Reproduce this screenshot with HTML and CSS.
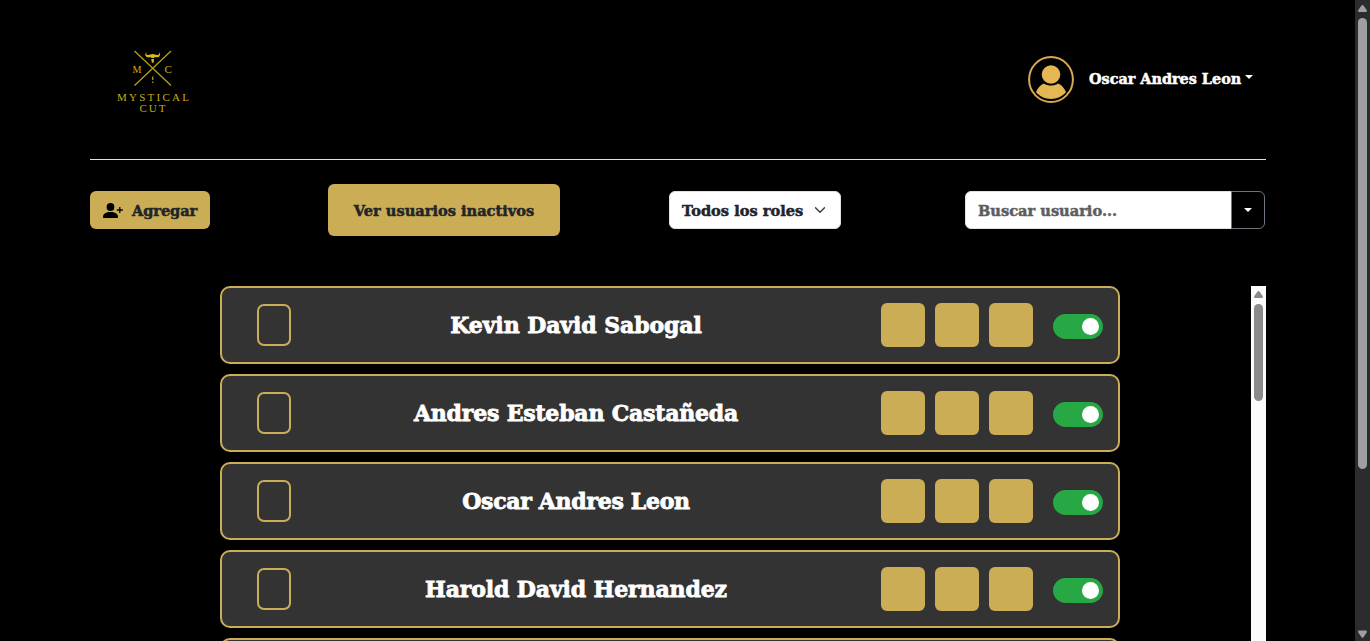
FILE: index.html
```html
<!DOCTYPE html>
<html lang="es">
<head>
<meta charset="utf-8">
<title>Mystical Cut</title>
<link rel="stylesheet" href="styles.css">
</head>
<body>
<div class="page">
  <header class="header">
    <svg class="logo" width="74" height="66" viewBox="0 0 74 66">
      <path d="M18.500 4 55 38.500M55 4 18.500 38.500" fill="none" stroke="#b5a012" stroke-width="1.300"/>
      <path d="M30.500 5c-1 1.700-.2 3 1.800 2.900 1.600 0 2.500-1 4.400-1s2.800 1 4.400 1c2 .1 2.800-1.200 1.800-2.900 2 1.400 1.400 5.300-1.800 5.300h-2.600l-.8.800h-2l-.8-.8h-2.600c-3.200 0-3.800-3.900-1.800-5.300z" fill="#d8bd0e"/>
      <path d="M35.300 12h2.800l-.5 3.800h-1.800z" fill="#d8bd0e"/>
      <path d="M36.700 29.500v3.500M36.700 34.500v1.500" stroke="#a08d10" stroke-width="1.500"/>
      <g class="logo-text"><text x="16.500" y="25.500" textLength="9" lengthAdjust="spacingAndGlyphs">M</text><text x="48.500" y="25.500">C</text><text x="1" y="53.700" textLength="72">MYSTICAL</text><text x="23.500" y="64.500" textLength="26">CUT</text></g>
    </svg>
    <div class="account">
      <svg class="avatar" width="46" height="48" viewBox="0 0 46 48">
        <ellipse cx="23" cy="24.500" rx="21.900" ry="22.500" fill="none" stroke="#d9aa4d" stroke-width="2"/>
        <circle cx="23" cy="19.500" r="9.300" fill="#e4b654"/>
        <path d="M8 37c1.700-4.300 4.500-7.200 8-8.600 4 2.800 10 2.800 14 0 3.500 1.400 6.300 4.300 8 8.600-7.500 9.300-22.500 9.300-30 0z" fill="#e4b654"/>
      </svg>
      <span class="account-name">Oscar Andres Leon</span><i class="caret"></i>
    </div>
  </header>
  <div class="toolbar">
    <button class="btn add"><svg width="22" height="16" viewBox="0 0 22 16"><circle cx="8.500" cy="5" r="3.900"/><path d="M1 15c0-3.500 3-5 7.500-5s7.500 1.500 7.500 5c0 .7-.4 1-1 1H2c-.6 0-1-.3-1-1z"/><path d="M17.800 5v6M14.800 8h6" stroke="#000" stroke-width="1.300"/></svg><span>Agregar</span></button>
    <button class="btn inactive"><span>Ver usuarios inactivos</span></button>
    <div class="select"><span>Todos los roles</span><svg width="12" height="12" viewBox="0 0 16 16"><path d="m2 5 6 6 6-6" fill="none" stroke="#343a40" stroke-width="1.800" stroke-linecap="round" stroke-linejoin="round"/></svg></div>
    <div class="search"><div class="field"><span>Buscar usuario...</span></div><button class="drop"><i class="caret"></i></button></div>
  </div>
  <div class="users">
    <div class="list">
      <div class="card"><i class="check"></i><span class="name n1">Kevin David Sabogal</span><div class="actions"><i></i><i></i><i></i></div><i class="toggle"></i></div>
      <div class="card"><i class="check"></i><span class="name n2">Andres Esteban Castañeda</span><div class="actions"><i></i><i></i><i></i></div><i class="toggle"></i></div>
      <div class="card"><i class="check"></i><span class="name n3">Oscar Andres Leon</span><div class="actions"><i></i><i></i><i></i></div><i class="toggle"></i></div>
      <div class="card"><i class="check"></i><span class="name n4">Harold David Hernandez</span><div class="actions"><i></i><i></i><i></i></div><i class="toggle"></i></div>
      <div class="card"></div>
    </div>
    <div class="bar light"><svg width="9" height="8" viewBox="0 0 9 8"><path d="M.5 7 0 5.500 3.500.5q1-1 2 0L9 5.500 8.500 7z"/></svg><i class="thumb"></i></div>
  </div>
</div>
<div class="bar dark"><svg width="9" height="8" viewBox="0 0 9 8"><path d="M.5 7 0 5.500 3.500.5q1-1 2 0L9 5.500 8.500 7z"/></svg><i class="thumb"></i><svg class="down" width="9" height="8" viewBox="0 0 9 8"><path d="M.5.500 0 2l3.500 5.200q1 1.200 2 0L9 2 8.500.5z"/></svg></div>
</body>
</html>
```
FILE: styles.css
```css
* { box-sizing: border-box; }
body { margin: 0; height: 641px; display: flex; overflow: hidden; background: #000; color: #fff; font: bold 14.6px/24px "DejaVu Serif", serif; -webkit-text-stroke: .5px currentColor; }
i { display: block; flex: none; }
svg { display: block; flex: none; }
span { white-space: nowrap; }
button { font: inherit; border: 0; padding: 0; color: #212529; }
.page { width: 1355px; padding: 0 89px 0 90px; }
.header { height: 160px; display: flex; justify-content: space-between; align-items: flex-start; border-bottom: 1px solid #dee2e6; }
.logo { margin: 47px 0 0 26px; overflow: visible; }
.logo-text { font: 11px "Liberation Serif", serif; fill: #c4ad13; -webkit-text-stroke: .45px #c4ad13; }
.account { display: flex; align-items: center; margin: 55px 13px 0 0; }
.account-name { width: 153px; margin-left: 15px; font-size: 14.4px; }
.caret { width: 8px; height: 4px; background: currentColor; clip-path: polygon(0 0, 100% 0, 50% 100%); }
.account .caret { margin: -4px 0 0 3px; }
.toolbar { height: 100px; display: flex; align-items: center; }
.toolbar span { padding-top: 1px; }
.btn { display: flex; align-items: center; background: #cbad56; border-radius: 6px; }
.add { width: 120px; height: 38px; padding-left: 12px; gap: 8px; }
.add span { letter-spacing: -.1px; }
.inactive { width: 232px; height: 52px; margin-left: 118px; justify-content: center; }
.select { width: 172px; height: 38px; margin-left: 109px; padding: 0 14px 0 12px; display: flex; align-items: center; justify-content: space-between; color: #212529; background: #fff; border: 1px solid #dee2e6; border-radius: 6px; }
.search { width: 300px; height: 38px; margin-left: 124px; display: flex; }
.field { width: 267px; display: flex; align-items: center; background: #fff; border: 1px solid #dee2e6; border-radius: 6px 0 0 6px; color: #5b5e61; padding: 0 12px; }
.drop { width: 34px; margin-left: -1px; display: flex; align-items: center; justify-content: center; background: #000; color: #fff; border: 1px solid #6c757d; border-radius: 0 6px 6px 0; }
.users { height: 355px; margin-top: 26px; display: flex; justify-content: space-between; overflow: hidden; }
.list { width: 900px; margin-left: 130px; display: flex; flex-direction: column; gap: 10px; }
.card { flex: none; height: 78px; padding: 0 15px 0 35px; display: flex; align-items: center; background: #333; border: 2px solid #cbad56; border-radius: 10px; }
.check { width: 34px; height: 42px; border: 2px solid #cbad56; border-radius: 7px; }
.name { flex: 1; padding-bottom: 1px; text-align: center; font-size: 22px; line-height: 30px; -webkit-text-stroke-width: .8px; }
.n1 { letter-spacing: -.08px; }
.n2 { letter-spacing: -.2px; }
.n3 { letter-spacing: -.3px; }
.n4 { letter-spacing: -.13px; }
.actions { display: flex; gap: 10px; margin: 0 20px; }
.actions i { width: 44px; height: 44px; background: #cbad56; border-radius: 6px; }
.toggle { width: 50px; height: 25px; margin-top: 3px; padding: 3.5px 4px; border-radius: 13px; background: #28a745; }
.toggle::after { content: ""; display: block; width: 17.500px; height: 17.500px; margin-left: auto; border-radius: 50%; background: #fff; }
.bar { width: 15px; flex: none; display: flex; flex-direction: column; align-items: center; padding-top: 5px; }
.thumb { width: 9px; border-radius: 5px; margin-top: 5px; }
.light { background: #fcfcfc; fill: #8b8b8b; }
.light .thumb { height: 97px; background: #8b8b8b; }
.dark { background: #2c2c2c; fill: #9f9f9f; }
.dark .thumb { height: 451px; background: #9f9f9f; }
.dark .down { margin: auto 0 3px; }
```
